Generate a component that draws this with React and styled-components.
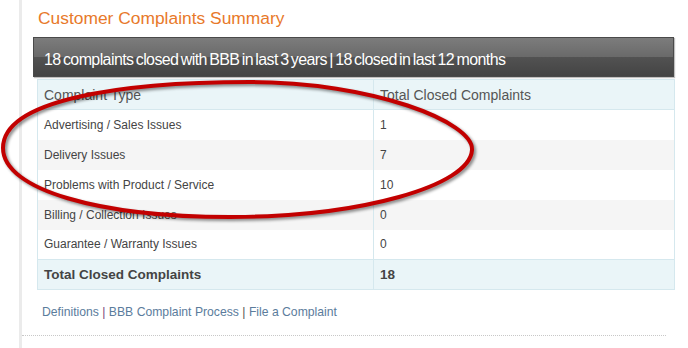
import React from 'react';
import styled, { createGlobalStyle } from 'styled-components';

const GlobalStyle = createGlobalStyle`
  body {
    margin: 0;
    background: #fff;
    font-family: "Liberation Sans", Arial, sans-serif;
  }
`;

const Page = styled.div`
  position: relative;
  width: 688px;
  height: 348px;
  overflow: hidden;
`;

const Panel = styled.div`
  margin-left: 19px;
  height: 348px;
  box-sizing: border-box;
  border-left: 3px solid #ebebeb;
  padding: 8px 14px 0 11px;
`;

const Title = styled.h2`
  margin: 0 0 9px 5px;
  font-size: 17.4px;
  line-height: 20px;
  font-weight: normal;
  color: #e8792a;
`;

const Bar = styled.div`
  width: 641px;
  height: 40px;
  box-sizing: border-box;
  padding: 5px 0 0 10px;
  border: 1px solid #4a4a4a;
  background: linear-gradient(
    to bottom,
    #7c7c7c 0%,
    #6a6a6a 49%,
    #525252 50%,
    #444 100%
  );
  box-shadow: 1px 1px 1px rgba(0, 0, 0, 0.25);
  color: #fff;
  font-size: 16px;
  line-height: 33px;
  letter-spacing: -0.6px;
  word-spacing: -1.5px;
  white-space: nowrap;
`;

const Table = styled.table`
  margin: 2px 0 0 4px;
  width: 638px;
  border-collapse: collapse;
  border: 1px solid #d5e8ee;
  color: #444;
`;

const Row = styled.tr`
  height: 30px;
  background: ${({ $variant }) =>
    $variant === 'head' || $variant === 'total'
      ? '#eaf5f8'
      : $variant === 'odd'
      ? '#f5f5f5'
      : '#fff'};
  border-top: ${({ $variant }) =>
    $variant === 'total' ? '1px solid #d5e8ee' : 'none'};
  border-bottom: ${({ $variant }) =>
    $variant === 'head' ? '1px solid #d5e8ee' : 'none'};
`;

const Cell = styled.td`
  padding: 0 0 0 6px;
  border-left: 1px solid #d5e8ee;
  font-size: ${({ $head, $bold }) => ($head ? '14px' : $bold ? '13.5px' : '12px')};
  font-weight: ${({ $bold }) => ($bold ? 'bold' : 'normal')};
  color: ${({ $head }) => ($head ? '#555' : '#444')};
  text-align: left;
  vertical-align: middle;
  &:first-child {
    width: 329px;
  }
`;

const Links = styled.div`
  margin: 14px 0 0 9px;
  font-size: 12.2px;
  line-height: 16px;
  color: #555;
`;

const Link = styled.a`
  color: #5b7c9c;
  text-decoration: none;
`;

const Sep = styled.span`
  color: ${({ $visited }) => ($visited ? '#7a3f7c' : '#555')};
`;

const Divider = styled.div`
  margin: 15px 0 0 -11px;
  width: 644px;
  border-top: 1px dotted #c8c8c8;
`;

const Scribble = styled.svg`
  position: absolute;
  left: 0;
  top: 0;
  pointer-events: none;
  filter: drop-shadow(2px 2px 1.5px rgba(0, 0, 0, 0.45));
`;

const rows = [
  { name: 'Advertising / Sales Issues', count: 1 },
  { name: 'Delivery Issues', count: 7 },
  { name: 'Problems with Product / Service', count: 10 },
  { name: 'Billing / Collection Issues', count: 0 },
  { name: 'Guarantee / Warranty Issues', count: 0 },
];

const App = () => {
  const total = rows.reduce((sum, r) => sum + r.count, 0);

  return (
    <Page>
      <GlobalStyle />
      <Panel>
        <Title>Customer Complaints Summary</Title>
        <Bar>18 complaints closed with BBB in last 3 years | 18 closed in last 12 months</Bar>
        <Table>
          <tbody>
            <Row $variant="head">
              <Cell $head>Complaint Type</Cell>
              <Cell $head>Total Closed Complaints</Cell>
            </Row>
            {rows.map((row, i) => (
              <Row key={row.name} $variant={i % 2 ? 'odd' : 'even'}>
                <Cell>{row.name}</Cell>
                <Cell>{row.count}</Cell>
              </Row>
            ))}
            <Row $variant="total">
              <Cell $bold>Total Closed Complaints</Cell>
              <Cell $bold>{total}</Cell>
            </Row>
          </tbody>
        </Table>
        <Links>
          <Link href="#">Definitions</Link> <Sep $visited>|</Sep>{' '}
          <Link href="#">BBB Complaint Process</Link> <Sep>|</Sep>{' '}
          <Link href="#">File a Complaint</Link>
        </Links>
        <Divider />
      </Panel>
      <Scribble width="688" height="348" viewBox="0 0 688 348">
        <path
          d="M3 148 C3 100 120 82 250 82 C372 82 474 122 472 150 C470 186 360 217 230 217 C100 217 3 190 3 148 Z"
          fill="none"
          stroke="#c20000"
          strokeWidth="4"
        />
      </Scribble>
    </Page>
  );
};

export default App;
